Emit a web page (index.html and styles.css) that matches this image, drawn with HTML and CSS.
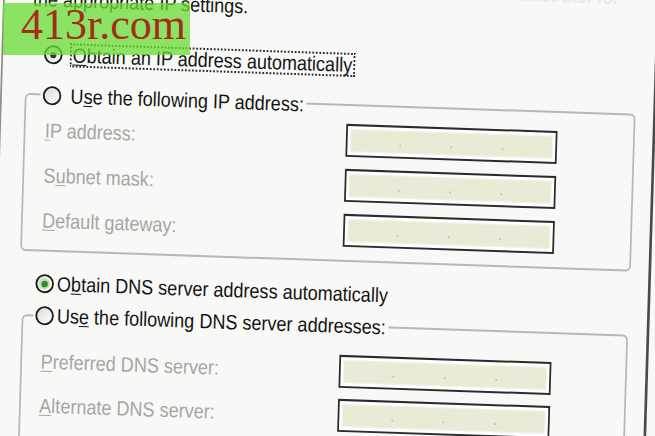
FILE: index.html
```html
<!DOCTYPE html>
<html lang="en">
<head>
    <meta charset="UTF-8">
    <title>Internet Protocol (TCP/IP) Properties</title>
    <link rel="stylesheet" href="styles.css">
</head>
<body>
    <div class="watermark">413r.com</div>

    <div class="dialog">
        <div class="intro intro-prev">administrator for</div>
        <div class="intro">the appropriate IP settings.</div>

        <div class="option option-ip">
            <svg class="radio" viewBox="0 0 20 20" preserveAspectRatio="none">
                <defs>
                    <linearGradient id="rg1" x1="0" y1="0" x2="1" y2="1">
                        <stop offset="0" stop-color="#d9d9d4"/>
                        <stop offset="1" stop-color="#ffffff"/>
                    </linearGradient>
                </defs>
                <circle cx="10" cy="10" r="8.6" fill="url(#rg1)" stroke="#1c1c1c" stroke-width="1.9"/>
                <circle cx="10" cy="10.4" r="3.2" fill="#2b3d2b"/>
            </svg>
            <span class="caption focused"><u>O</u>btain an IP address automatically</span>
        </div>

        <div class="group group-ip">
            <div class="group-title">
                <svg class="radio" viewBox="0 0 20 20" preserveAspectRatio="none">
                    <defs>
                        <linearGradient id="rg2" x1="0" y1="0" x2="1" y2="1">
                            <stop offset="0" stop-color="#d9d9d4"/>
                            <stop offset="1" stop-color="#ffffff"/>
                        </linearGradient>
                    </defs>
                    <circle cx="10" cy="10" r="8.6" fill="url(#rg2)" stroke="#1c1c1c" stroke-width="1.9"/>
                </svg>
                <span class="caption">U<u>s</u>e the following IP address:</span>
            </div>
            <div class="fields">
                <div class="field">
                    <span class="label"><u>I</u>P address:</span>
                    <div class="ip-box"><div class="ip-inner"><i>.</i><i>.</i><i>.</i></div></div>
                </div>
                <div class="field">
                    <span class="label">S<u>u</u>bnet mask:</span>
                    <div class="ip-box"><div class="ip-inner"><i>.</i><i>.</i><i>.</i></div></div>
                </div>
                <div class="field">
                    <span class="label"><u>D</u>efault gateway:</span>
                    <div class="ip-box"><div class="ip-inner"><i>.</i><i>.</i><i>.</i></div></div>
                </div>
            </div>
        </div>

        <div class="option option-dns">
            <svg class="radio" viewBox="0 0 20 20" preserveAspectRatio="none">
                <defs>
                    <linearGradient id="rg3" x1="0" y1="0" x2="1" y2="1">
                        <stop offset="0" stop-color="#d9d9d4"/>
                        <stop offset="1" stop-color="#ffffff"/>
                    </linearGradient>
                </defs>
                <circle cx="10" cy="10" r="8.6" fill="url(#rg3)" stroke="#1c1c1c" stroke-width="1.9"/>
                <circle cx="10" cy="10" r="5.4" fill="#b9e2ae"/>
                <circle cx="10" cy="10.3" r="3.3" fill="#2f8d2f"/>
            </svg>
            <span class="caption">O<u>b</u>tain DNS server address automatically</span>
        </div>

        <div class="group group-dns">
            <div class="group-title">
                <svg class="radio" viewBox="0 0 20 20" preserveAspectRatio="none">
                    <defs>
                        <linearGradient id="rg4" x1="0" y1="0" x2="1" y2="1">
                            <stop offset="0" stop-color="#d9d9d4"/>
                            <stop offset="1" stop-color="#ffffff"/>
                        </linearGradient>
                    </defs>
                    <circle cx="10" cy="10" r="8.6" fill="url(#rg4)" stroke="#1c1c1c" stroke-width="1.9"/>
                </svg>
                <span class="caption">Us<u>e</u> the following DNS server addresses:</span>
            </div>
            <div class="fields">
                <div class="field">
                    <span class="label"><u>P</u>referred DNS server:</span>
                    <div class="ip-box"><div class="ip-inner"><i>.</i><i>.</i><i>.</i></div></div>
                </div>
                <div class="field">
                    <span class="label"><u>A</u>lternate DNS server:</span>
                    <div class="ip-box"><div class="ip-inner"><i>.</i><i>.</i><i>.</i></div></div>
                </div>
            </div>
        </div>
    </div>
</body>
</html>
```

FILE: styles.css
```css
* {
    box-sizing: border-box;
}

html, body {
    margin: 0;
    height: 100%;
    overflow: hidden;
    background: #f8f8f6;
}

body {
    position: relative;
    font-family: "Liberation Sans", Arial, sans-serif;
    font-size: 20.5px;
    color: #141414;
}

/* watermark over the photo */
.watermark {
    position: absolute;
    top: 3px;
    left: 3px;
    z-index: 2;
    width: 187px;
    height: 52px;
    padding-left: 18px;
    background: rgba(104, 220, 52, 0.76);
    font-family: "Liberation Serif", "Times New Roman", serif;
    font-size: 44px;
    line-height: 44px;
    color: #a52c1a;
}

/* the photographed dialog is slightly squashed and tilted */
.dialog {
    display: flow-root;
    width: 745px;
    min-height: 540px;
    margin-left: 3px;
    border-left: 2px solid #8e8e8e;
    border-right: 3px solid #4a4a4a;
    transform: matrix(0.88, 0.03, -0.03, 1, 0, 0);
    transform-origin: 0 0;
}

.intro {
    height: 22px;
    line-height: 22px;
    padding-left: 32px;
    white-space: nowrap;
}

.intro-prev {
    margin-top: -35px;
    padding-right: 43px;
    text-align: right;
    color: #e6e6e4;
}

.option {
    display: flex;
    align-items: center;
    height: 24px;
}

.option-ip {
    margin-top: 32px;
    padding-left: 46px;
    gap: 8px;
}

.option-dns {
    margin-top: 20px;
    padding-left: 44px;
    gap: 3px;
}

.radio {
    width: 22px;
    height: 20px;
    flex-shrink: 0;
}

.caption {
    white-space: nowrap;
    line-height: 24px;
}

.caption.focused {
    border: 2px dotted #2a2a2a;
    padding: 0 1px;
    line-height: 20px;
}

u {
    text-decoration-thickness: 1px;
    text-underline-offset: 2px;
}

/* group boxes */
.group {
    border: 2px solid #b7b7b5;
    border-radius: 6px;
}

.group-ip {
    margin: 27px 20px 0 26px;
    padding-bottom: 13px;
}

.group-dns {
    margin: 19px 21px 0 30px;
    min-height: 200px;
}

.group-title {
    display: flex;
    align-items: center;
    width: fit-content;
    height: 24px;
    padding: 0 3px 0 2px;
    background: #f8f8f6;
}

.group-ip .group-title {
    margin: -12px 0 0 16px;
    gap: 10px;
}

.group-dns .group-title {
    margin: -13px 0 0 11px;
    gap: 3px;
}

.fields {
    display: flex;
    flex-direction: column;
}

.group-ip .fields {
    padding: 6px 0 0 22px;
    gap: 12px;
}

.group-dns .fields {
    padding: 17px 0 0 21px;
    gap: 11px;
}

.field {
    display: grid;
    align-items: center;
    height: 33px;
}

.group-ip .field {
    grid-template-columns: 342px 240px;
}

.group-dns .field {
    grid-template-columns: 339px 241px;
}

.label {
    color: #a6a6a4;
    white-space: nowrap;
}

/* disabled IP address control */
.ip-box {
    height: 33px;
    padding: 3px;
    border: 2px solid #2b2b2b;
    background: #ffffff;
}

.ip-inner {
    display: flex;
    justify-content: space-evenly;
    align-items: flex-end;
    height: 100%;
    background: #ebead7;
    border: 1px solid #f3f3ea;
}

.ip-inner i {
    font-style: normal;
    font-size: 16px;
    line-height: 1;
    padding-bottom: 3px;
    color: #bdb99b;
}
```
